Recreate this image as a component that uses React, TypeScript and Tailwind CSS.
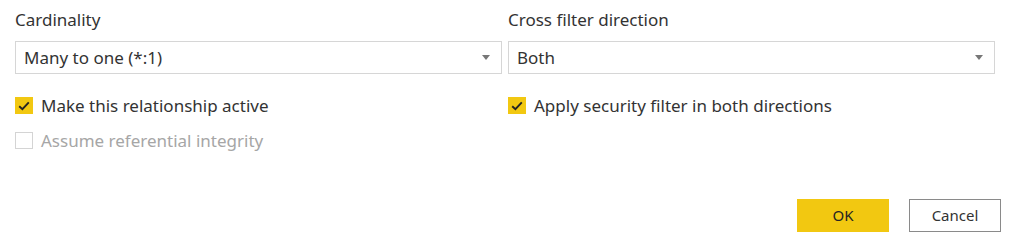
import { ReactNode } from 'react';

function Select({ value }: { value: string }) {
  return (
    <div className="flex h-[33px] items-center justify-between border border-[#d6d6d6] bg-white pl-[8px] pr-[11px]">
      <span className="text-[17px] text-[#333]">{value}</span>
      <svg width="8" height="5" viewBox="0 0 8 5">
        <path d="M0 0 L8 0 L4 5 Z" fill="#777" />
      </svg>
    </div>
  );
}

function Check({ checked, disabled, children }: { checked?: boolean; disabled?: boolean; children: ReactNode }) {
  return (
    <div className="flex h-[17px] items-center gap-[8px]">
      {checked ? (
        <span className="flex h-[17px] w-[18px] items-center justify-center bg-[#f2c811]">
          <svg width="12" height="10" viewBox="0 0 12 10">
            <path d="M1.2 5.2 L4.4 8.2 L10.8 1.4" fill="none" stroke="#252423" strokeWidth="1.9" />
          </svg>
        </span>
      ) : (
        <span className="h-[17px] w-[18px] border border-[#d4d4d4] bg-white" />
      )}
      <span className={disabled ? 'text-[17px] text-[#a6a6a6]' : 'text-[17px] text-[#333]'}>{children}</span>
    </div>
  );
}

export default function App() {
  return (
    <div
      className="flex h-[244px] w-[1024px] flex-col bg-white pl-[15px] pr-[28px] pt-[8px]"
      style={{ fontFamily: '"Noto Sans", "Open Sans", sans-serif' }}
    >
      <div className="grid grid-cols-[487px_487px] gap-x-[6px]">
        <div className="flex flex-col">
          <div className="mb-[9px] h-[24px] text-[17px] leading-[24px] text-[#333]">Cardinality</div>
          <Select value="Many to one (*:1)" />
          <div className="mt-[23px]">
            <Check checked>Make this relationship active</Check>
          </div>
          <div className="mt-[18px]">
            <Check disabled>Assume referential integrity</Check>
          </div>
        </div>
        <div className="flex flex-col">
          <div className="mb-[9px] h-[24px] text-[17px] leading-[24px] text-[#333]">Cross filter direction</div>
          <Select value="Both" />
          <div className="mt-[23px]">
            <Check checked>Apply security filter in both directions</Check>
          </div>
        </div>
      </div>
      <div className="mr-[-5px] mt-[50px] flex justify-end gap-[20px]">
        <button className="h-[33px] w-[92px] bg-[#f2c811] text-[15px] text-[#252423]">OK</button>
        <button className="h-[33px] w-[92px] border border-[#8a8a8a] bg-white text-[15px] text-[#333]">Cancel</button>
      </div>
    </div>
  );
}
